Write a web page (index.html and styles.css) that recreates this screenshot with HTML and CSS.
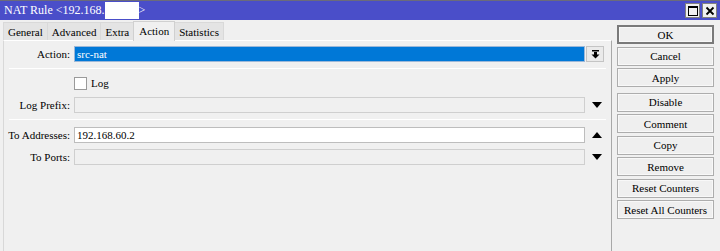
FILE: index.html
```html
<!DOCTYPE html>
<html>
<head>
<meta charset="utf-8">
<link rel="stylesheet" href="styles.css">
</head>
<body>
<div class="window">
  <div class="titlebar">
    <div class="title">NAT Rule &lt;192.168.<span class="redact"></span>&gt;</div>
    <div class="tb-btns">
      <div class="tb-btn"><svg width="12" height="12" viewBox="0 0 12 12"><rect x="1.5" y="1.5" width="9" height="9" fill="none" stroke="#000" stroke-width="1"/><rect x="1" y="1" width="10" height="2" fill="#000"/></svg></div>
      <div class="tb-btn"><svg width="12" height="12" viewBox="0 0 12 12"><path d="M2.5 2.5 L9.5 9.5 M9.5 2.5 L2.5 9.5" stroke="#000" stroke-width="1.8"/></svg></div>
    </div>
  </div>
  <div class="body">
    <div class="main">
      <div class="tabs">
        <div class="tab">General</div>
        <div class="tab">Advanced</div>
        <div class="tab">Extra</div>
        <div class="tab active">Action</div>
        <div class="tab">Statistics</div>
      </div>
      <div class="panel">
        <div class="row r-action">
          <label class="lbl">Action:</label>
          <div class="field selected">src-nat</div>
          <div class="dd"><svg width="9" height="9" viewBox="0 0 9 9"><rect x="1" y="0" width="7" height="1.5" fill="#000"/><rect x="3" y="2" width="3" height="3" fill="#000"/><path d="M0.5 4.5 L8.5 4.5 L4.5 8.5 Z" fill="#000"/></svg></div>
        </div>
        <div class="sep"></div>
        <div class="row r-check">
          <div class="lbl"></div>
          <div class="check"><span class="box"></span><span>Log</span></div>
        </div>
        <div class="row r-prefix">
          <label class="lbl">Log Prefix:</label>
          <div class="field disabled"></div>
          <div class="arrow"><svg width="10" height="6" viewBox="0 0 10 6"><path d="M0 0 L10 0 L5 6 Z" fill="#000"/></svg></div>
        </div>
        <div class="sep"></div>
        <div class="row r-addr">
          <label class="lbl">To Addresses:</label>
          <div class="field white">192.168.60.2</div>
          <div class="arrow"><svg width="10" height="6" viewBox="0 0 10 6"><path d="M0 6 L10 6 L5 0 Z" fill="#000"/></svg></div>
        </div>
        <div class="row r-ports">
          <label class="lbl">To Ports:</label>
          <div class="field disabled"></div>
          <div class="arrow"><svg width="10" height="6" viewBox="0 0 10 6"><path d="M0 0 L10 0 L5 6 Z" fill="#000"/></svg></div>
        </div>
      </div>
    </div>
    <div class="side">
      <div class="btn default">OK</div>
      <div class="btn">Cancel</div>
      <div class="btn">Apply</div>
      <div class="btn gap">Disable</div>
      <div class="btn">Comment</div>
      <div class="btn">Copy</div>
      <div class="btn">Remove</div>
      <div class="btn">Reset Counters</div>
      <div class="btn">Reset All Counters</div>
    </div>
  </div>
</div>
</body>
</html>
```

FILE: styles.css
```css
* { box-sizing: border-box; }
html, body { margin: 0; padding: 0; }
body {
  width: 720px;
  height: 251px;
  overflow: hidden;
  background: #f0f0f0;
  font-family: "Liberation Serif", "Times New Roman", serif;
  font-size: 11px;
  color: #000;
}
.window { width: 720px; height: 251px; display: flex; flex-direction: column; }
.titlebar {
  height: 20px;
  background: #4a4ec9;
  border-top: 1px solid #6b6b7a;
  display: flex;
  align-items: center;
  justify-content: space-between;
  padding: 0 3px 0 4px;
}
.title { color: #fff; font-size: 12px; display: flex; align-items: center; }
.redact { display: inline-block; width: 34px; height: 17px; background: #fff; }
.tb-btns { display: flex; gap: 2px; }
.tb-btn {
  width: 15px; height: 15px;
  background: #f0f0f0;
  border: 1px solid #808080;
  display: flex; align-items: center; justify-content: center;
}
.body { flex: 1; display: flex; }
.main { width: 612px; display: flex; flex-direction: column; padding-left: 3px; }
.tabs { height: 20px; display: flex; align-items: flex-end; }
.tab {
  height: 18px;
  padding: 0 4px;
  border: 1px solid #d9d9d9;
  border-bottom: none;
  background: #e4e4e4;
  display: flex; align-items: center;
  margin-right: -1px;
}
.tab.active {
  height: 20px;
  background: #f0f0f0;
  border-color: #d0d0d0;
  padding: 0 5px 2px;
  position: relative;
  z-index: 1;
  margin-bottom: -1px;
}
.panel {
  flex: 1;
  border-top: 1px solid #fff;
  border-left: 1px solid #d8d8d8;
  border-right: 1px solid #a8a8a8;
  padding-top: 5px;
}
.row { display: flex; align-items: center; height: 16px; }
.lbl { width: 67px; text-align: right; padding-right: 1px; flex-shrink: 0; }
.field {
  width: 511px; height: 16px;
  border: 1px solid #c4c4c4;
  padding-left: 2px;
  display: flex; align-items: center;
  margin-left: 3px;
}
.field.selected { background: #0078d7; color: #fff; border-color: #9cb8d8; }
.field.disabled { background: #f0f0f0; border-color: #cfcfcf; }
.field.white { background: #fff; border-color: #bdbdbd; }
.dd {
  width: 18px; height: 16px;
  margin-left: 1px;
  border: 1px solid #c4c4c4;
  background: #eaeaea;
  display: flex; align-items: center; justify-content: center;
}
.arrow { width: 18px; margin-left: 3px; display: flex; justify-content: center; align-items: center; }
.sep { height: 1px; background: #d6d6d6; margin: 6px 5px 7px 5px; border-bottom: 1px solid #fff; }
.r-check { margin-bottom: 7px; height: 14px; }
.check { display: flex; align-items: center; margin-left: 3px; gap: 4px; }
.box { width: 13px; height: 13px; background: #fff; border: 1px solid #9a9a9a; }
.r-addr { margin-bottom: 6px; }
.side {
  width: 108px;
  padding: 5px 6px 0 5px;
  display: flex; flex-direction: column; gap: 2.5px;
}
.btn {
  height: 19px;
  flex-shrink: 0;
  border: 1px solid #adadad;
  background: #efefef;
  display: flex; align-items: center; justify-content: center;
  box-shadow: inset 0 0 0 1px #f8f8f8;
}
.btn.default { border: 2px solid #7a7a7a; }
.btn.gap { margin-top: 3px; }
```
